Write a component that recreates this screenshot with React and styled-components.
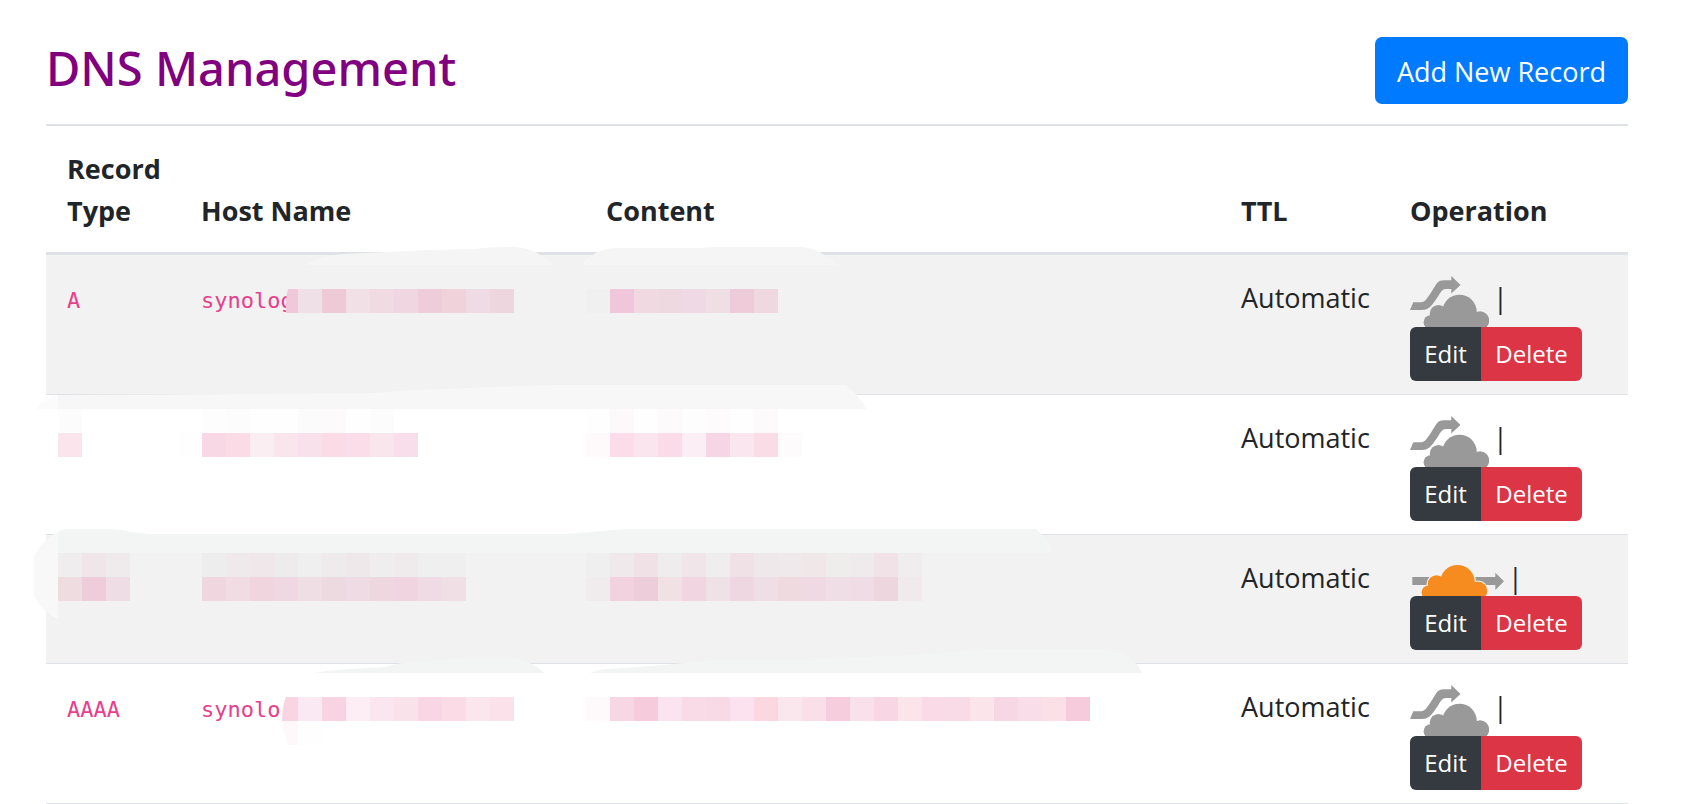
import styled, { createGlobalStyle } from "styled-components";

const GlobalStyle = createGlobalStyle`
  *,
  *::before,
  *::after {
    box-sizing: border-box;
  }

  body {
    margin: 0;
    background: #fff;
    color: #212529;
    font-family: "Segoe UI", "Open Sans", "Noto Sans", sans-serif;
    font-size: 27px;
    line-height: 42px;
  }
`;

const Page = styled.main`
  position: relative;
  padding: 37px 66px 0 46px;
  overflow: hidden;
`;

const TitleBar = styled.header`
  display: flex;
  align-items: flex-start;
  justify-content: space-between;
  padding-bottom: 20px;
`;

const Title = styled.h1`
  margin: 0;
  color: purple;
  font-family: "Segoe UI", "Noto Sans", sans-serif;
  font-size: 47px;
  font-weight: 500;
  line-height: 62px;
`;

const AddButton = styled.button`
  padding: 14px 22px 11px;
  border: 0;
  border-radius: 7px;
  background: #007bff;
  color: #fff;
  font: inherit;
  cursor: pointer;
`;

const RecordTable = styled.table`
  width: 100%;
  table-layout: fixed;
  border-collapse: separate;
  border-spacing: 0;
`;

const HeadCell = styled.th`
  width: ${({ $width }) => $width || "auto"};
  padding: 22px 21px 20px;
  border-top: 2px solid #dee2e6;
  border-bottom: 3px solid #dee2e6;
  font-weight: 700;
  text-align: left;
  vertical-align: bottom;
`;

const Row = styled.tr`
  &:nth-child(odd) {
    background: #f2f2f2;
  }
`;

const Cell = styled.td`
  padding: 22px 21px 13px;
  border-bottom: 1px solid #dee2e6;
  vertical-align: top;
  white-space: nowrap;
`;

const Code = styled.code`
  color: #e83e8c;
  font-family: "DejaVu Sans Mono", monospace;
  font-size: 22px;
`;

const ProxyStatus = styled.div`
  display: flex;
  align-items: flex-start;
  gap: 4px;
  height: ${({ $proxied }) => ($proxied ? "39px" : "50px")};

  svg {
    display: block;
    align-self: flex-end;
  }
`;

const ButtonGroup = styled.div`
  display: flex;
`;

const ActionButton = styled.button`
  width: ${({ $danger }) => ($danger ? "101px" : "71px")};
  height: 54px;
  padding: 0;
  border: 0;
  border-radius: ${({ $danger }) => ($danger ? "0 6px 6px 0" : "6px 0 0 6px")};
  background: ${({ $danger }) => ($danger ? "#dc3545" : "#343a40")};
  color: #fff;
  font: inherit;
  font-size: 24px;
  cursor: pointer;
`;

const Redactions = styled.svg`
  position: absolute;
  top: 0;
  left: 0;
  pointer-events: none;
`;

const CloudShape = () => (
  <>
    <circle cx="49.5" cy="36" r="17.3" />
    <circle cx="28.5" cy="37.7" r="8.8" />
    <circle cx="20.5" cy="46.2" r="6.9" />
    <circle cx="70" cy="44.5" r="9.2" />
    <rect x="20" y="40" width="52" height="12" />
  </>
);

const DnsOnlyIcon = () => (
  <svg width="79" height="51" viewBox="0 0 79 51" fill="#999" aria-label="DNS only">
    <path d="M0 34L3.3 26.3H11C15 26.3 17 22.5 22 15C27 7 28 4.3 34 4.3H41.3V0L50.5 9L41.3 17.5V13H36C32 13 31 16 27 22C21 31 18 34 12 34Z" />
    <CloudShape />
    <rect x="15" y="46" width="62" height="5" />
  </svg>
);

const ProxiedIcon = () => (
  <svg width="94" height="31" viewBox="0 0 94 31" aria-label="Proxied">
    <path d="M2.3 12H85.3V7.7L94 16.3L85.3 25V20H2.3Z" fill="#999" />
    <g transform="translate(-2 -18.7)">
      <g fill="#f2f2f2" stroke="#f2f2f2" strokeWidth="2.4">
        <CloudShape />
      </g>
      <g fill="#f68b1f">
        <CloudShape />
      </g>
    </g>
  </svg>
);

const CELL = 24;

// each strip starts at x, y and runs to the right, one block per colour
const mosaics = [
  { x: 298, y: 289, colors: "efdfe6 eecad7 f1e1e7 f0dbe2 f0d6e1 eeccd9 f0d2db efdbe4 eed6de" },
  { x: 586, y: 289, colors: "f0f0f0 efc6da f0d9e0 efd9e1 efd9e4 efdfe4 edcbd9 efd8df" },
  { x: 58, y: 409, colors: "fcfcfc" },
  { x: 202, y: 409, colors: "fdfdfd fcfcfc fefefe fefefe fcfbfc fdfafb fefefe fcfcfc" },
  { x: 586, y: 409, colors: "fefefe fdf9fb fefefe fdfafb fdfdfd fdfbfc fefefe fdfafb" },
  { x: 58, y: 433, colors: "fbe5ed" },
  { x: 178, y: 433, colors: "fefefe f8d8e5 fbdce6 fbeef3 fae5ec f8e1ea fbdce6 fbdce9 f9e6ed f8deea" },
  { x: 586, y: 433, colors: "fef9fb fbdce8 fae5ee fadce8 fceef5 f6d5e5 fae6ee fadce6 fefbfc" },
  { x: 58, y: 553, colors: "efedee f0e6e9 efebec" },
  { x: 202, y: 553, colors: "eeeded f0e9eb efe7ea eeebed eeefee efebed efe8ea efedee efeaec eeefee eeefee" },
  { x: 586, y: 553, colors: "eeefee f0e9eb efe1e6 efeced f0e5e8 efedee f0e1e6 efe8ea efe9eb f0e7e8 efecec efebec f0e2e6 efedee" },
  { x: 58, y: 577, colors: "efdce1 eeccda efdde5" },
  { x: 202, y: 577, colors: "efd6df f0dce2 f0d4de efd8e2 efdfe4 edd9e0 efdbe3 eed7df f0d5e1 efdbe4 f0e0e5" },
  { x: 586, y: 577, colors: "f0eced f1d2de eecddb efe1e4 f1d5e0 efe2e7 efd7e1 efdee5 efdae0 efdae3 efdee5 efdce4 eed6de f0eaec" },
  { x: 298, y: 697, colors: "fae9f2 f8d3e2 fdeef6 fbe6ef fae2ea f8d6e3 fadbe6 fbe6ee fae1ea" },
  { x: 586, y: 697, colors: "fefafc f8d7e4 f6ccdd fbe4ef f9dbe7 f8dae6 fbe2ee fad7e1 fae7ed fbdfe8 f6cddd f9e1ec f8d6e4 fbe4ea f9dae6 f9dae7 fbe5ea f8d7e4 f9dde9 fbe1e7 f6ccdd" },
  { x: 298, y: 721, colors: "fefefe" },
];

const smears = [
  { fill: "#f5f5f5", d: "M305 265Q320 255 345 254L430 250L475 249Q490 247 515 247Q535 248 555 265Z" },
  { fill: "#f5f5f5", d: "M581 265Q596 248 617 248H700L712 247H800Q818 247 837 265Z" },
  { fill: "#fbfbfb", d: "M36 409Q46 397 58 395V409Z" },
  { fill: "#f7f7f7", d: "M58 409V395L250 394L375 393L415 390L550 385H845Q858 393 866 409Z" },
  { fill: "#f8f8f8", d: "M58 532Q43 539 34 556V596Q42 612 58 619Z" },
  { fill: "#f2f5f4", d: "M58 553V532Q62 529 66 529H105Q122 529 130 532L150 534H568L625 529H1036Q1047 538 1053 553Z" },
  { fill: "#f3f5f5", d: "M315 673Q325 670 385 667Q395 664 402 663L440 660L475 658H510Q530 660 545 673Z" },
  { fill: "#f3f5f5", d: "M590 673Q598 669 608 669L664 665L715 660H800L910 655L980 650L1010 649H1085Q1115 650 1122 653Q1135 658 1142 673Z" },
  { fill: "#f0c8d9", d: "M288 289H298V313H286Q285 299 288 289Z" },
  { fill: "#f9d5e3", d: "M286 697H298V721H282Q282 706 286 697Z" },
  { fill: "#fef8fa", d: "M282 721H298V745H289Q284 736 282 721Z" },
];

const records = [
  { id: 1, type: "A", host: "synolog", ttl: "Automatic", proxied: false },
  { id: 2, type: "", host: "", ttl: "Automatic", proxied: false },
  { id: 3, type: "", host: "", ttl: "Automatic", proxied: true },
  { id: 4, type: "AAAA", host: "synolo", ttl: "Automatic", proxied: false },
];

const RecordRow = ({ record }) => (
  <Row>
    <Cell>
      <Code>{record.type}</Code>
    </Cell>
    <Cell>
      <Code>{record.host}</Code>
    </Cell>
    <Cell />
    <Cell>{record.ttl}</Cell>
    <Cell>
      <ProxyStatus $proxied={record.proxied}>
        {record.proxied ? <ProxiedIcon /> : <DnsOnlyIcon />}
        <span>|</span>
      </ProxyStatus>
      <ButtonGroup>
        <ActionButton type="button">Edit</ActionButton>
        <ActionButton type="button" $danger>
          Delete
        </ActionButton>
      </ButtonGroup>
    </Cell>
  </Row>
);

const App = () => {
  return (
    <>
      <GlobalStyle />
      <Page>
        <TitleBar>
          <Title>DNS Management</Title>
          <AddButton type="button">Add New Record</AddButton>
        </TitleBar>
        <RecordTable>
          <thead>
            <tr>
              <HeadCell $width="134px">Record Type</HeadCell>
              <HeadCell $width="405px">Host Name</HeadCell>
              <HeadCell>Content</HeadCell>
              <HeadCell $width="169px">TTL</HeadCell>
              <HeadCell $width="239px">Operation</HeadCell>
            </tr>
          </thead>
          <tbody>
            {records.map((record) => (
              <RecordRow key={record.id} record={record} />
            ))}
          </tbody>
        </RecordTable>
        <Redactions width="1160" height="800" aria-hidden="true">
          {smears.map(({ fill, d }) => (
            <path key={d} fill={fill} d={d} />
          ))}
          {mosaics.map(({ x, y, colors }) =>
            colors.split(" ").map((color, i) => (
              <rect key={`${x}-${y}-${i}`} x={x + i * CELL} y={y} width={CELL} height={CELL} fill={`#${color}`} />
            ))
          )}
        </Redactions>
      </Page>
    </>
  );
};

export default App;
